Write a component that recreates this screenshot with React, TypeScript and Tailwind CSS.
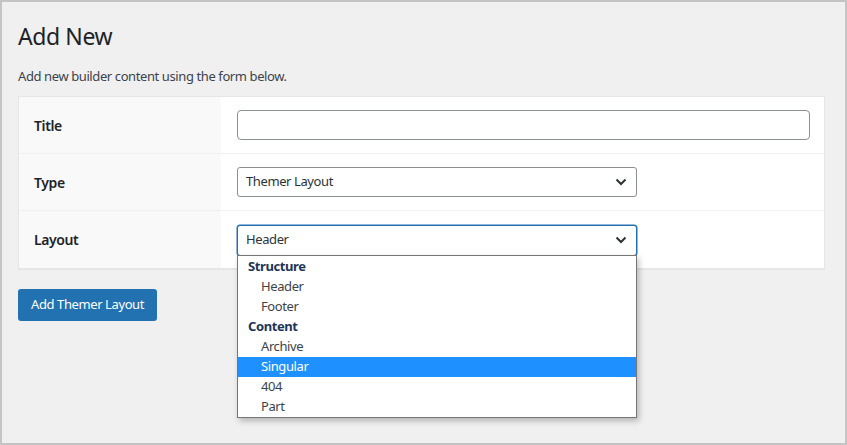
import React from "react";

const font = { fontFamily: '"Noto Sans", "Open Sans", Arial, sans-serif' };

function Chevron() {
  return (
    <svg width="12" height="8" viewBox="0 0 12 8" className="absolute right-[9px] top-1/2 -translate-y-1/2">
      <path d="M1.5 1.5 L6 6 L10.5 1.5" fill="none" stroke="#2c3338" strokeWidth="2" />
    </svg>
  );
}

const options: { label: string; group?: boolean; active?: boolean }[] = [
  { label: "Structure", group: true },
  { label: "Header" },
  { label: "Footer" },
  { label: "Content", group: true },
  { label: "Archive" },
  { label: "Singular", active: true },
  { label: "404" },
  { label: "Part" },
];

export default function App() {
  return (
    <div
      className="w-[847px] h-[445px] border-2 border-[#c4c4c4] bg-[#f0f0f1] text-[#1d2327] pl-4 pr-5 pt-[20px] tracking-[-0.025em]"
      style={font}
    >
      <h1 className="text-[23px] leading-[28px] font-normal">Add New</h1>
      <p className="mt-[18px] text-[13px] leading-[16px] text-[#3c434a]">
        Add new builder content using the form below.
      </p>

      {/* Form table */}
      <div className="mt-[12px] w-[807px] bg-white border border-[#e6e6e6] shadow-[0_1px_1px_rgba(0,0,0,0.04)]">
        <div className="flex h-[57px] border-b border-[#f0f0f1]">
          <div className="w-[202px] bg-[#f9f9f9] flex items-center pl-[15px] text-[14px] font-semibold">Title</div>
          <div className="flex-1 flex items-center pl-[16px] pr-[14px]">
            <div className="w-full h-[30px] border border-[#8c8f94] rounded-[4px]" />
          </div>
        </div>
        <div className="flex h-[57px] border-b border-[#f0f0f1]">
          <div className="w-[202px] bg-[#f9f9f9] flex items-center pl-[15px] text-[14px] font-semibold">Type</div>
          <div className="flex-1 flex items-center pl-[16px]">
            <div className="relative w-[400px] h-[30px] border border-[#8c8f94] rounded-[3px] flex items-center pl-[8px] text-[13px] text-[#2c3338]">
              Themer Layout
              <Chevron />
            </div>
          </div>
        </div>
        <div className="flex h-[57px]">
          <div className="w-[202px] bg-[#f9f9f9] flex items-center pl-[15px] text-[14px] font-semibold">Layout</div>
          <div className="flex-1 flex items-center pl-[16px]">
            <div className="relative w-[400px] mt-[1px]">
              <div className="relative h-[31px] border border-[#2271b1] rounded-[3px] shadow-[0_0_0_0.5px_#2271b1] flex items-center pl-[8px] text-[13px] text-[#2c3338] bg-white">
                Header
                <Chevron />
              </div>
              {/* Open dropdown */}
              <div className="absolute left-0 top-[30px] w-[400px] bg-white border border-[#767676] shadow-[2px_3px_6px_rgba(0,0,0,0.25)] z-10 pt-[1px]">
                {options.map((o) => (
                  <div
                    key={o.label}
                    className={
                      "h-[20px] flex items-center text-[13px] " +
                      (o.group
                        ? "pl-[10px] font-bold text-[#1d3557]"
                        : o.active
                        ? "pl-[23px] bg-[#1e90ff] text-white"
                        : "pl-[23px] text-[#3c434a]")
                    }
                  >
                    {o.label}
                  </div>
                ))}
              </div>
            </div>
          </div>
        </div>
      </div>

      <button className="mt-[20px] h-[32px] px-[13px] bg-[#2271b1] text-white text-[13px] rounded-[3px]">
        Add Themer Layout
      </button>
    </div>
  );
}
